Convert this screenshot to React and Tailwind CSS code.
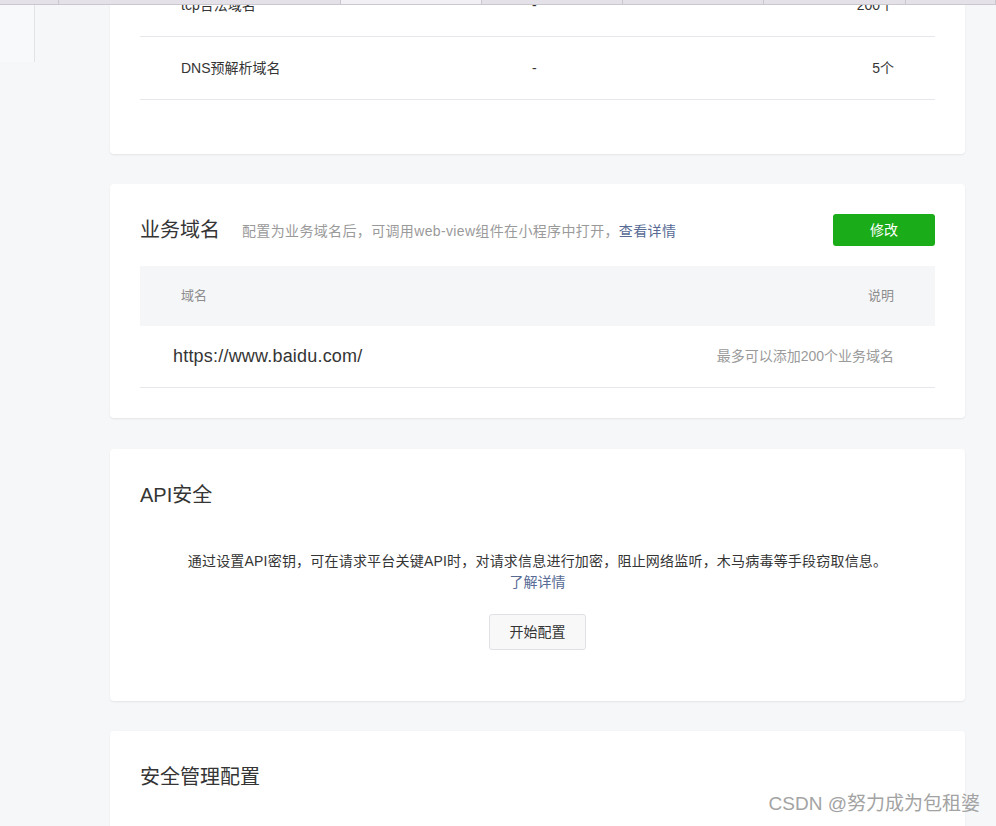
import React from 'react'

const FONT = { fontFamily: '"Liberation Sans", "Noto Sans CJK SC", sans-serif' }

const TABS = [
  { w: 59 }, { w: 282 }, { w: 141, active: true }, { w: 141 }, { w: 141 }, { w: 142 }, { w: 90 },
]

function Card({ children, className = '' }) {
  return (
    <div className={`bg-white rounded-[4px] shadow-[0_1px_2px_rgba(0,0,0,0.08)] px-[30px] ${className}`}>
      {children}
    </div>
  )
}

export default function App() {
  return (
    <div className="relative w-[996px] h-[826px] overflow-hidden bg-[#f6f7f9] flex" style={FONT}>
      {/* left rail */}
      <div className="w-[110px] shrink-0 flex">
        <div className="w-[35px] h-[62px] border-r border-[#e2e3e6] bg-[#f8f9fa]" />
      </div>

      {/* main column */}
      <div className="w-[855px] shrink-0 flex flex-col gap-[30px] -mt-[26px]">
        {/* server domains (scrolled) */}
        <Card className="pb-[54px]">
          {[['tcp合法域名', '-', '200个'], ['DNS预解析域名', '-', '5个']].map(r => (
            <div key={r[0]} className="h-[63px] flex items-center border-b border-[#e7e7eb] text-[14px] text-[#353535] pl-[41px] pr-[41px]">
              <span className="w-[351px]">{r[0]}</span>
              <span className="flex-1">{r[1]}</span>
              <span>{r[2]}</span>
            </div>
          ))}
        </Card>

        {/* business domain */}
        <Card className="pt-[30px] pb-[30px]">
          <div className="h-[32px] flex items-center">
            <h2 className="text-[20px] text-[#353535] font-normal">业务域名</h2>
            <p className="ml-[22px] text-[14px] text-[#9a9a9a] mt-[2px] tracking-[0.35px]">
              配置为业务域名后，可调用web-view组件在小程序中打开，<span className="text-[#576b95]">查看详情</span>
            </p>
            <button className="ml-auto w-[102px] h-[32px] rounded-[3px] bg-[#1aad19] text-white text-[14px]">修改</button>
          </div>
          <div className="mt-[20px] h-[60px] bg-[#f5f6f8] flex items-center justify-between px-[41px] text-[13px] text-[#8d8d8d]">
            <span>域名</span>
            <span>说明</span>
          </div>
          <div className="h-[62px] flex items-center justify-between border-b border-[#e7e7eb] pl-[33px] pr-[41px]">
            <span className="text-[18px] text-[#353535] tracking-[0.2px]">https://www.baidu.com/</span>
            <span className="text-[14px] text-[#9a9a9a]">最多可以添加200个业务域名</span>
          </div>
        </Card>

        {/* api security */}
        <Card className="mt-[1px] pt-[30px] pb-[51px]">
          <div className="h-[32px] flex items-center">
            <h2 className="text-[20px] text-[#353535] font-normal">API安全</h2>
          </div>
          <div className="mt-[40px] flex flex-col items-center">
            <p className="text-[14px] leading-[21px] text-[#353535] tracking-[0.2px]">
              通过设置API密钥，可在请求平台关键API时，对请求信息进行加密，阻止网络监听，木马病毒等手段窃取信息。
            </p>
            <a className="text-[14px] leading-[21px] text-[#576b95]">了解详情</a>
            <button className="mt-[21px] w-[97px] h-[36px] rounded-[3px] border border-[#e0e1e5] bg-[#f8f8f8] text-[14px] text-[#353535]">
              开始配置
            </button>
          </div>
        </Card>

        {/* security management */}
        <Card className="pt-[30px] pb-[80px]">
          <div className="h-[32px] flex items-center">
            <h2 className="text-[20px] text-[#353535] font-normal">安全管理配置</h2>
          </div>
        </Card>
      </div>

      {/* browser tab strip overlay */}
      <div className="absolute top-0 left-0 w-full h-[5px] flex bg-[#e4e2e8] border-b border-[#cac8ce]">
        {TABS.map((t, i) => (
          <div
            key={i}
            className={`h-full border-r border-[#cac8ce] ${t.active ? 'bg-[#f3f0f5]' : ''}`}
            style={{ width: t.w }}
          />
        ))}
      </div>

      {/* watermark */}
      <div className="absolute right-[16px] bottom-[8px] text-[19px] text-[#a3a3a3]">CSDN @努力成为包租婆</div>
    </div>
  )
}
